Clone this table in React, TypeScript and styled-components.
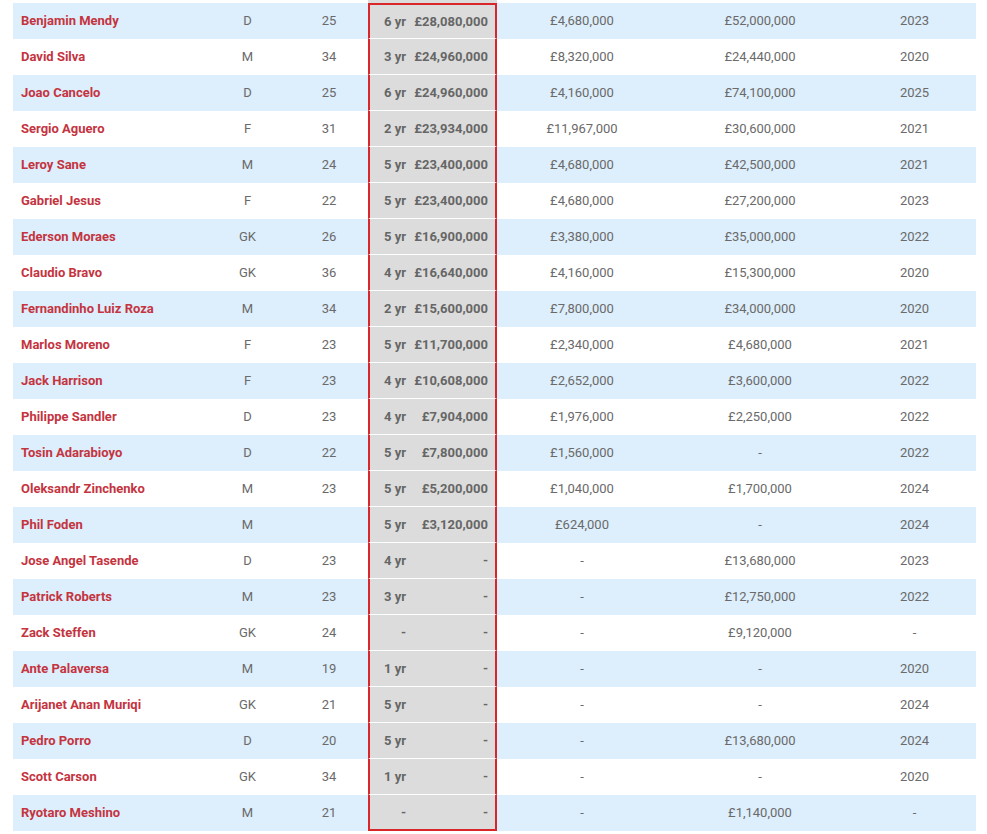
import styled, { createGlobalStyle } from "styled-components";

const GlobalStyle = createGlobalStyle`
    body {
        margin: 0;
        background: #fff;
        font-family: Roboto, "Liberation Sans", Arial, sans-serif;
    }
`;

const COLS = "192px 85px 78px 46px 83px 170px 186px 123px";

const Page = styled.div`
    padding: 0 11px 0 13px;
`;

const Table = styled.div`
    width: 963px;
    display: flex;
    flex-direction: column;
`;

const Row = styled.div<{ striped: boolean }>`
    display: grid;
    grid-template-columns: ${COLS};
    height: 36px;
    background-color: ${(props) => (props.striped ? "#ddeefc" : "#ffffff")};
    font-size: 13px;
    color: #6a6a6a;
`;

/* the tail of the row above, scrolled almost out of view */
const CapRow = styled.div`
    display: grid;
    grid-template-columns: ${COLS};
    height: 3px;
`;

const CapCell = styled.div`
    grid-column: 4 / span 2;
    background-color: #dcdcdc;
`;

const Cell = styled.div<{ align?: "left" | "center" | "right" }>`
    display: flex;
    align-items: center;
    justify-content: ${(props) =>
        props.align === "left" ? "flex-start" : props.align === "right" ? "flex-end" : "center"};
    padding: 0 8px 1px;
    white-space: nowrap;
`;

const NameCell = styled(Cell)`
    color: #c4343f;
    font-weight: 700;
`;

const HighCell = styled(Cell)<{ first: boolean; last: boolean; side: "l" | "r" }>`
    background-color: #dcdcdc;
    font-weight: 700;
    color: #666;
    box-sizing: border-box;
    border-top: ${(props) => (props.first ? "2px solid #d8262b" : "none")};
    border-bottom: ${(props) => (props.last ? "2px solid #d8262b" : "1px solid #ffffff")};
    border-left: ${(props) => (props.side === "l" ? "2px solid #d8262b" : "none")};
    border-right: ${(props) => (props.side === "r" ? "2px solid #d8262b" : "none")};
    padding: ${(props) => (props.side === "l" ? "0 8px 0 0" : "0 7px 0 0")};
`;

type Player = [string, string, string, string, string, string, string, string];

const players: Player[] = [
    ["Benjamin Mendy", "D", "25", "6 yr", "£28,080,000", "£4,680,000", "£52,000,000", "2023"],
    ["David Silva", "M", "34", "3 yr", "£24,960,000", "£8,320,000", "£24,440,000", "2020"],
    ["Joao Cancelo", "D", "25", "6 yr", "£24,960,000", "£4,160,000", "£74,100,000", "2025"],
    ["Sergio Aguero", "F", "31", "2 yr", "£23,934,000", "£11,967,000", "£30,600,000", "2021"],
    ["Leroy Sane", "M", "24", "5 yr", "£23,400,000", "£4,680,000", "£42,500,000", "2021"],
    ["Gabriel Jesus", "F", "22", "5 yr", "£23,400,000", "£4,680,000", "£27,200,000", "2023"],
    ["Ederson Moraes", "GK", "26", "5 yr", "£16,900,000", "£3,380,000", "£35,000,000", "2022"],
    ["Claudio Bravo", "GK", "36", "4 yr", "£16,640,000", "£4,160,000", "£15,300,000", "2020"],
    ["Fernandinho Luiz Roza", "M", "34", "2 yr", "£15,600,000", "£7,800,000", "£34,000,000", "2020"],
    ["Marlos Moreno", "F", "23", "5 yr", "£11,700,000", "£2,340,000", "£4,680,000", "2021"],
    ["Jack Harrison", "F", "23", "4 yr", "£10,608,000", "£2,652,000", "£3,600,000", "2022"],
    ["Philippe Sandler", "D", "23", "4 yr", "£7,904,000", "£1,976,000", "£2,250,000", "2022"],
    ["Tosin Adarabioyo", "D", "22", "5 yr", "£7,800,000", "£1,560,000", "-", "2022"],
    ["Oleksandr Zinchenko", "M", "23", "5 yr", "£5,200,000", "£1,040,000", "£1,700,000", "2024"],
    ["Phil Foden", "M", "", "5 yr", "£3,120,000", "£624,000", "-", "2024"],
    ["Jose Angel Tasende", "D", "23", "4 yr", "-", "-", "£13,680,000", "2023"],
    ["Patrick Roberts", "M", "23", "3 yr", "-", "-", "£12,750,000", "2022"],
    ["Zack Steffen", "GK", "24", "-", "-", "-", "£9,120,000", "-"],
    ["Ante Palaversa", "M", "19", "1 yr", "-", "-", "-", "2020"],
    ["Arijanet Anan Muriqi", "GK", "21", "5 yr", "-", "-", "-", "2024"],
    ["Pedro Porro", "D", "20", "5 yr", "-", "-", "£13,680,000", "2024"],
    ["Scott Carson", "GK", "34", "1 yr", "-", "-", "-", "2020"],
    ["Ryotaro Meshino", "M", "21", "-", "-", "-", "£1,140,000", "-"],
];

function App() {
    return (
        <Page>
            <GlobalStyle />
            <Table>
                <CapRow>
                    <CapCell />
                </CapRow>
                {players.map((p, i) => {
                    const first = i === 0;
                    const last = i === players.length - 1;
                    return (
                        <Row key={p[0]} striped={i % 2 === 0}>
                            <NameCell align="left">{p[0]}</NameCell>
                            <Cell>{p[1]}</Cell>
                            <Cell>{p[2]}</Cell>
                            <HighCell align="right" side="l" first={first} last={last}>
                                {p[3]}
                            </HighCell>
                            <HighCell align="right" side="r" first={first} last={last}>
                                {p[4]}
                            </HighCell>
                            <Cell>{p[5]}</Cell>
                            <Cell>{p[6]}</Cell>
                            <Cell>{p[7]}</Cell>
                        </Row>
                    );
                })}
            </Table>
        </Page>
    );
}

export default App;
